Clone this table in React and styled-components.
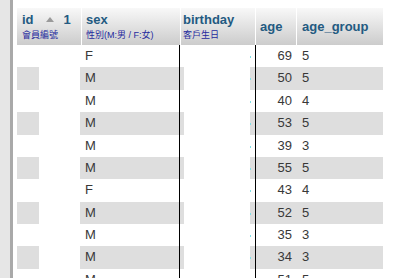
import React from 'react';
import styled, { createGlobalStyle } from 'styled-components';

const GlobalStyle = createGlobalStyle`
  html, body {
    margin: 0;
    padding: 0;
    background: #fff;
    overflow: hidden;
  }
  body {
    font-family: "Liberation Sans", Arial, "Noto Sans CJK TC", sans-serif;
  }
`;

const rows = [
  { sex: 'F', age: 69, group: 5 },
  { sex: 'M', age: 50, group: 5 },
  { sex: 'M', age: 40, group: 4 },
  { sex: 'M', age: 53, group: 5 },
  { sex: 'M', age: 39, group: 3 },
  { sex: 'M', age: 55, group: 5 },
  { sex: 'F', age: 43, group: 4 },
  { sex: 'M', age: 52, group: 5 },
  { sex: 'M', age: 35, group: 3 },
  { sex: 'M', age: 34, group: 3 },
  { sex: 'M', age: 51, group: 5 },
];

const Page = styled.div`
  display: flex;
  width: 397px;
  height: 278px;
  overflow: hidden;
`;

const Sidebar = styled.div`
  width: 10px;
  flex: none;
  background: #e6e6e6;
  border-right: 3px solid #a9a9a9;
`;

const Content = styled.div`
  padding: 8px 0 0 4px;
  width: 366px;
`;

const HeaderRow = styled.div`
  display: grid;
  grid-template-columns: 64px 98px 74px 40px 86px;
  column-gap: 1px;
  height: 37px;
`;

const HeadCell = styled.div`
  background: linear-gradient(#f8f8f8, #cccccc);
  padding-left: ${p => p.$pad || 4}px;
  display: flex;
  flex-direction: column;
  justify-content: center;
  white-space: nowrap;
`;

const Title = styled.div`
  font-size: 13px;
  font-weight: bold;
  line-height: 15px;
  color: #235a81;
  display: flex;
  align-items: center;
`;

const SortArrow = styled.span`
  margin: 0 10px 0 12px;
  width: 0;
  height: 0;
  border-left: 4px solid transparent;
  border-right: 4px solid transparent;
  border-bottom: 5px solid #9a9a9a;
`;

const Sub = styled.div`
  font-size: 9px;
  line-height: 11px;
  margin-top: 3px;
  color: #1f2a9e;
`;

const Body = styled.div`
  position: relative;

  &::before, &::after {
    content: '';
    position: absolute;
    top: 0;
    bottom: 0;
    width: 1px;
    background: #000;
  }
  &::before { left: 162px; }
  &::after { left: 238px; }
`;

const Row = styled.div`
  display: grid;
  grid-template-columns: 22px 41px 104px 66px 133px;
  height: 22.375px;
  font-size: 13px;
  line-height: 22px;
  color: #383838;
`;

const Shade = styled.div`
  background: ${p => (p.$odd ? '#dedede' : 'transparent')};
  padding-left: ${p => p.$pad || 0}px;
`;

const NumCell = styled(Shade)`
  display: flex;
`;

const Tick = styled.span`
  width: 1px;
  height: 2px;
  margin-top: 11px;
  background: #7fe0e6;
`;

const Age = styled.span`
  width: 41px;
  text-align: right;
`;

const Group = styled.span`
  margin-left: 10px;
`;

export default function App() {
  return (
    <Page>
      <GlobalStyle />
      <Sidebar />
      <Content>
        <HeaderRow>
          <HeadCell $pad={5}>
            <Title>id<SortArrow />1</Title>
            <Sub>會員編號</Sub>
          </HeadCell>
          <HeadCell $pad={4}>
            <Title>sex</Title>
            <Sub>性別(M:男 / F:女)</Sub>
          </HeadCell>
          <HeadCell $pad={2}>
            <Title>birthday</Title>
            <Sub>客戶生日</Sub>
          </HeadCell>
          <HeadCell $pad={4}>
            <Title>age</Title>
          </HeadCell>
          <HeadCell $pad={5}>
            <Title>age_group</Title>
          </HeadCell>
        </HeaderRow>
        <Body>
          {rows.map((r, i) => {
            const odd = i % 2 === 1;
            return (
              <Row key={i}>
                <Shade $odd={odd} />
                <Shade />
                <Shade $odd={odd} $pad={5}>{r.sex}</Shade>
                <Shade />
                <NumCell $odd={odd}>
                  <Tick />
                  <Age>{r.age}</Age>
                  <Group>{r.group}</Group>
                </NumCell>
              </Row>
            );
          })}
        </Body>
      </Content>
    </Page>
  );
}
